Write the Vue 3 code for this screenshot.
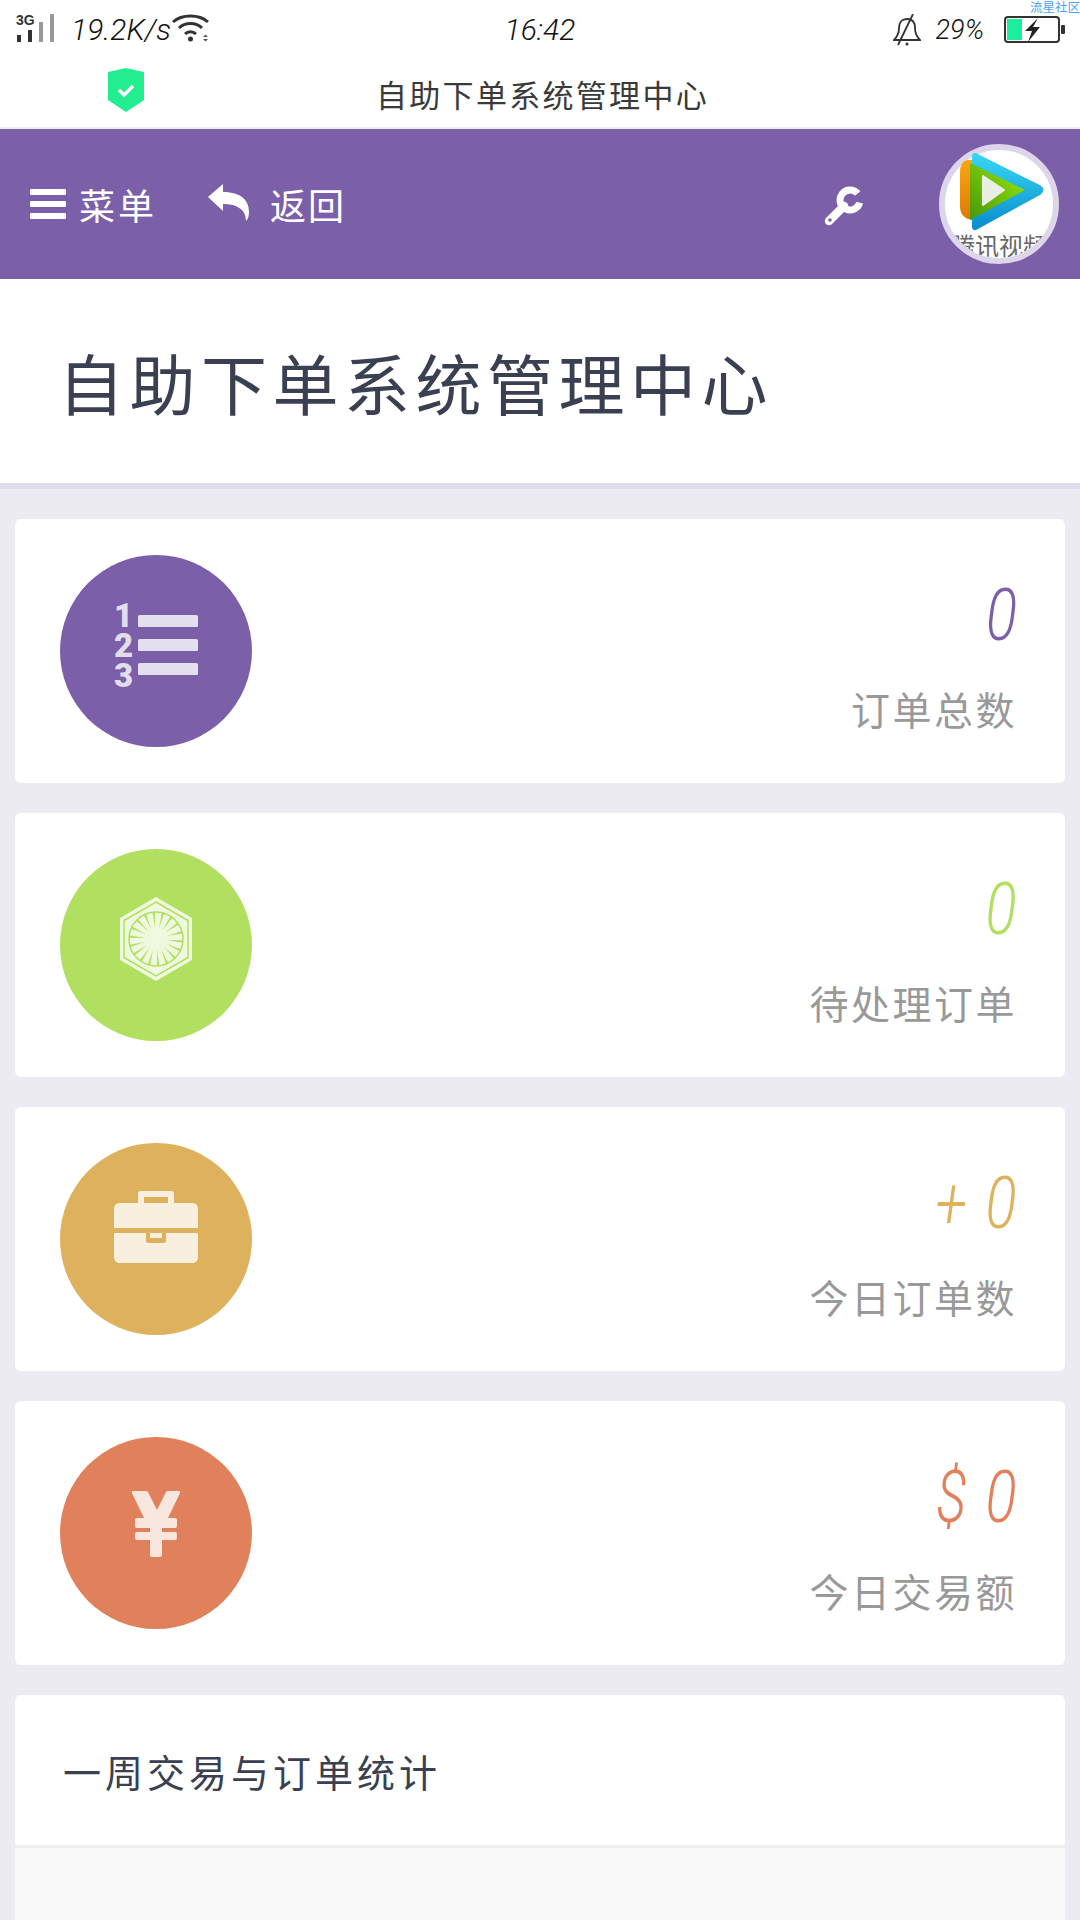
<template>
  <div class="page">
    <!-- status bar -->
    <div class="status-bar">
      <div class="status-left">
        <svg class="signal" width="40" height="30" viewBox="0 0 40 30">
          <text x="0" y="11" class="net">3G</text>
          <rect x="1" y="21" width="4" height="7" fill="#333" />
          <rect x="12" y="16" width="4" height="12" fill="#333" />
          <rect x="23" y="8" width="4" height="20" fill="#999" />
          <rect x="34" y="0" width="4" height="28" fill="#999" />
        </svg>
        <span class="speed">19.2K/s</span>
        <svg class="wifi" width="37" height="30" viewBox="0 0 37 30" fill="none" stroke="#333" stroke-width="3">
          <path d="M1 9C10 1 27 1 36 9" />
          <path d="M7 15C13 9 24 9 30 15" />
          <path d="M13 21C16 18 21 18 24 21" />
          <circle cx="18.500" cy="26" r="2.500" fill="#333" stroke="none" />
          <path d="M31 24l2.500 -2.500l2.500 2.500zM31 26l2.500 2.500l2.500 -2.500z" fill="#555" stroke="none" />
        </svg>
      </div>
      <span class="time">16:42</span>
      <div class="status-right">
        <svg width="28" height="32" viewBox="0 0 28 32" fill="none" stroke="#333" stroke-width="1.800">
          <path d="M1 26C5 22 6 18 6 14C6 8 9 5 14 5C19 5 22 8 22 14C22 18 23 22 27 26Z" />
          <path d="M20 0L5 31" />
          <circle cx="14" cy="30" r="1.500" fill="#333" stroke="none" />
        </svg>
        <span class="percent">29%</span>
        <svg width="61" height="28" viewBox="0 0 61 28">
          <rect x="1" y="1" width="54" height="25" rx="3" fill="none" stroke="#333" stroke-width="2" />
          <rect x="3" y="3" width="15" height="21" fill="#1ceea0" />
          <path d="M34 2L21 15H28L24 26L36 11H29Z" fill="#222" />
          <rect x="57" y="9" width="4" height="9" rx="1" fill="#333" />
        </svg>
      </div>
      <span class="corner-tag">流星社区</span>
    </div>

    <!-- browser title -->
    <div class="title-bar">
      <svg width="36" height="44" viewBox="0 0 36 44">
        <path d="M18 0L36 4V32L18 44L0 32V4Z" fill="#22ee90" />
        <path d="M11 22L16 27L25 18" fill="none" stroke="#fff" stroke-width="3.500" />
      </svg>
      <span class="title-text">自助下单系统管理中心</span>
    </div>

    <!-- header -->
    <header class="app-header">
      <div class="menu-btn">
        <span class="burger"><i></i><i></i><i></i></span>
        <span class="menu-text">菜单</span>
      </div>
      <div class="back-btn">
        <svg width="41" height="37" viewBox="0 0 41 37">
          <path d="M0 13L15 0V8C30 8 41 14 41 28C41 32 40 35 38 37C38 26 30 20 15 20V27Z" fill="#fff" />
        </svg>
        <span class="back-text">返回</span>
      </div>
      <svg class="wrench" width="39" height="40" viewBox="0 0 39 40">
        <path d="M5 35L20 20" stroke="#fff" stroke-width="8.500" stroke-linecap="round" />
        <path d="M33.700 7.600A10 10 0 1 0 35.700 16.600" fill="none" stroke="#fff" stroke-width="7" />
        <circle cx="6" cy="34" r="1.800" fill="#7b5fa8" />
      </svg>
      <svg class="avatar" width="120" height="120" viewBox="0 0 120 120">
        <defs>
          <clipPath id="avatarClip"><circle cx="60" cy="60" r="54" /></clipPath>
          <linearGradient id="logoBlue" x1="0" y1="0" x2="0" y2="1">
            <stop offset="0" stop-color="#38d4f2" />
            <stop offset="1" stop-color="#0a8ecf" />
          </linearGradient>
          <linearGradient id="logoOrange" x1="0" y1="0" x2="0" y2="1">
            <stop offset="0" stop-color="#fba512" />
            <stop offset="1" stop-color="#dd7a02" />
          </linearGradient>
          <linearGradient id="logoGreen" x1="1" y1="0" x2="0" y2="1">
            <stop offset="0" stop-color="#9bec08" />
            <stop offset="1" stop-color="#47960a" />
          </linearGradient>
        </defs>
        <circle cx="60" cy="60" r="57" fill="#fff" stroke="#ddd6eb" stroke-width="6" />
        <path d="M36 12L100 44Q103 46 100 48L36 83Z" fill="url(#logoBlue)" stroke="url(#logoBlue)" stroke-width="6" stroke-linejoin="round" />
        <path d="M33 16H28Q21 18 21 28V62Q21 74 33 76Z" fill="url(#logoOrange)" />
        <path d="M31 19L86 46L31 76Z" fill="url(#logoGreen)" />
        <path d="M44 32L65 46L44 61Z" fill="#e9efe2" stroke="#e9efe2" stroke-width="2" stroke-linejoin="round" />
        <g clip-path="url(#avatarClip)">
          <text x="60" y="111" text-anchor="middle" class="avatar-text">腾讯视频</text>
        </g>
      </svg>
    </header>

    <!-- page heading -->
    <div class="hero">
      <h1>自助下单系统管理中心</h1>
    </div>

    <div class="content">
      <div v-for="item in stats" :key="item.label" class="stat-card">
        <div class="circle" :style="{ backgroundColor: item.color }">
          <svg class="circle-icon" width="84" height="84" viewBox="0 0 84 84" fill="#fff" fill-opacity=".8">
            <template v-if="item.icon === 'list'">
              <text x="0" y="24" class="digit">1</text>
              <text x="0" y="54" class="digit">2</text>
              <text x="0" y="84" class="digit">3</text>
              <rect x="24" y="12" width="60" height="12" rx="1.500" />
              <rect x="24" y="36" width="60" height="12" rx="1.500" />
              <rect x="24" y="60" width="60" height="12" rx="1.500" />
            </template>
            <template v-else-if="item.icon === 'order'">
              <path d="M42 0L78 21V63L42 84L6 63V21Z" />
              <path d="M42 5L74 23.500V60.500L42 79L10 60.500V23.500Z" fill="none" :stroke="item.color" stroke-width="1.500" stroke-opacity="1" />
              <circle cx="42" cy="42" r="27" fill="none" :stroke="item.color" stroke-width="1.500" stroke-opacity="1" />
              <path v-for="(ray, i) in rays" :key="i" :d="ray" :fill="item.color" fill-opacity="1" />
            </template>
            <template v-else-if="item.icon === 'case'">
              <path fill-rule="evenodd" d="M27 0H57Q60 0 60 3V12H54V6H30V12H24V3Q24 0 27 0Z" />
              <path d="M6 12H78Q84 12 84 18V37H0V18Q0 12 6 12Z" />
              <path d="M0 42H32V50Q32 52 34 52H50Q52 52 52 50V42H84V66Q84 72 78 72H6Q0 72 0 66Z" />
              <rect x="36" y="42" width="12" height="5" />
            </template>
            <template v-else>
              <path d="M19 6H32Q33 6 34 7L43 25L52 7Q53 6 54 6H65Q67 6 66 8L54 33H61Q63 33 63 35V41Q63 43 61 43H48V47H61Q63 47 63 49V53Q63 55 61 55H48V70Q48 72 46 72H38Q36 72 36 70V55H23Q21 55 21 53V49Q21 47 23 47H36V43H23Q21 43 21 41V35Q21 33 23 33H30L18 8Q17 6 19 6Z" />
            </template>
          </svg>
        </div>
        <div class="stat-info">
          <div class="stat-value" :style="{ color: item.color }">{{ item.value }}</div>
          <div class="stat-label">{{ item.label }}</div>
        </div>
      </div>

      <div class="chart-card">
        <div class="chart-title">一周交易与订单统计</div>
        <div class="chart-body"></div>
      </div>
    </div>
  </div>
</template>

<script setup>
const stats = [
  { label: '订单总数', value: '0', color: '#7b5fa8', icon: 'list' },
  { label: '待处理订单', value: '0', color: '#b1df5f', icon: 'order' },
  { label: '今日订单数', value: '+ 0', color: '#deb15c', icon: 'case' },
  { label: '今日交易额', value: '$ 0', color: '#e0815b', icon: 'yen' }
]

// 待处理图标里的放射线（外粗内细的楔形）
const rays = Array.from({ length: 18 }, (_, i) => {
  const a = (i * 20 * Math.PI) / 180 + 0.09
  const p = (r, d) => `${42 + Math.cos(a + d) * r} ${42 + Math.sin(a + d) * r}`
  return `M${p(11, 0)}L${p(27, 0.045)}L${p(27, -0.045)}Z`
})
</script>

<style scoped>
.page {
  width: 1080px;
  height: 1920px;
  overflow: hidden;
  background-color: #edebf2;
  font-family: "Noto Sans CJK SC", "Noto Sans", sans-serif;
}

.status-bar {
  position: relative;
  height: 60px;
  background-color: #fff;
  display: grid;
  grid-template-columns: 1fr auto 1fr;
  align-items: center;
  color: #111;
}

.status-left {
  display: flex;
  align-items: center;
  padding-left: 16px;
}

.net {
  font: bold 14px "Liberation Sans", sans-serif;
  fill: #333;
}

.signal {
  margin-top: -3px;
}

.speed,
.time,
.percent {
  font-family: Roboto, sans-serif;
  font-weight: 300;
  font-size: 30px;
  font-style: italic;
  line-height: 40px;
}

.speed {
  margin-left: 15px;
  width: 101px;
  white-space: nowrap;
}

.wifi {
  margin-top: -4px;
}

.status-right {
  display: flex;
  align-items: center;
  justify-content: flex-end;
  padding-right: 15px;
}

.percent {
  margin: 0 20px 0 15px;
  font-size: 27px;
}

.corner-tag {
  position: absolute;
  top: 0;
  right: 0;
  font-size: 12.500px;
  line-height: 13px;
  color: #4aa3f5;
}

.title-bar {
  height: 67px;
  background-color: #fff;
  border-bottom: 2px solid #eee;
  display: flex;
  align-items: center;
  padding-left: 108px;
  gap: 232px;
}

.title-bar svg {
  margin-top: -8px;
}

.title-text {
  font-size: 31px;
  letter-spacing: 2.300px;
  color: #3a3a3a;
}

.app-header {
  height: 150px;
  background-color: #7b5fa8;
  display: flex;
  align-items: center;
  padding-left: 30px;
  color: #fff;
}

.menu-btn,
.back-btn {
  display: flex;
  align-items: center;
}

.burger {
  display: flex;
  flex-direction: column;
  gap: 6px;
  width: 36px;
}

.burger i {
  height: 6px;
  border-radius: 1px;
  background-color: #fff;
}

.menu-text {
  margin-left: 13px;
  font-size: 36px;
  letter-spacing: 3px;
}

.back-btn {
  margin-left: 51px;
}

.back-btn svg {
  margin-top: -4px;
}

.back-text {
  margin-left: 21px;
  font-size: 36px;
  letter-spacing: 2px;
}

.wrench {
  margin-left: 478px;
  margin-top: 4px;
}

.avatar {
  margin-left: 76px;
  flex-shrink: 0;
}

.avatar-text {
  font: 24px "Noto Sans CJK SC", sans-serif;
  fill: #666;
}

.hero {
  height: 204px;
  background-color: #fff;
  border-bottom: 6px solid #e0dceb;
  display: flex;
  align-items: center;
  padding-left: 58px;
}

.hero h1 {
  margin: 0;
  font-size: 66px;
  font-weight: 400;
  letter-spacing: 5.500px;
  color: #3a3f51;
}

.content {
  padding: 30px 15px 0;
  display: flex;
  flex-direction: column;
  gap: 30px;
}

.stat-card {
  height: 264px;
  box-sizing: border-box;
  padding: 36px 48px 36px 45px;
  background-color: #fff;
  border-radius: 6px;
  display: flex;
  justify-content: space-between;
}

.circle {
  width: 192px;
  height: 192px;
  border-radius: 50%;
  display: flex;
  align-items: center;
  justify-content: center;
  padding-bottom: 12px;
  box-sizing: border-box;
}

.circle-icon {
  overflow: visible;
}

.digit {
  font: 900 33px Roboto, sans-serif;
}

.stat-info {
  text-align: right;
  padding-top: 19px;
}

.stat-value {
  font-family: Roboto, sans-serif;
  font-weight: 300;
  font-style: italic;
  font-size: 72px;
  line-height: 84px;
  word-spacing: 6px;
  transform: scaleX(0.8);
  transform-origin: right center;
}

.stat-label {
  margin-top: 22px;
  font-size: 39px;
  line-height: 56px;
  letter-spacing: 2.500px;
  color: #999;
}

.chart-card {
  height: 600px;
  background-color: #fff;
  border-radius: 6px 6px 0 0;
  overflow: hidden;
}

.chart-title {
  height: 153px;
  box-sizing: border-box;
  border-bottom: 3px solid #eee;
  padding-left: 48px;
  display: flex;
  align-items: center;
  font-size: 38px;
  letter-spacing: 4px;
  color: #3a3f51;
}

.chart-body {
  height: 447px;
  background-color: #f9f9f9;
}
</style>
